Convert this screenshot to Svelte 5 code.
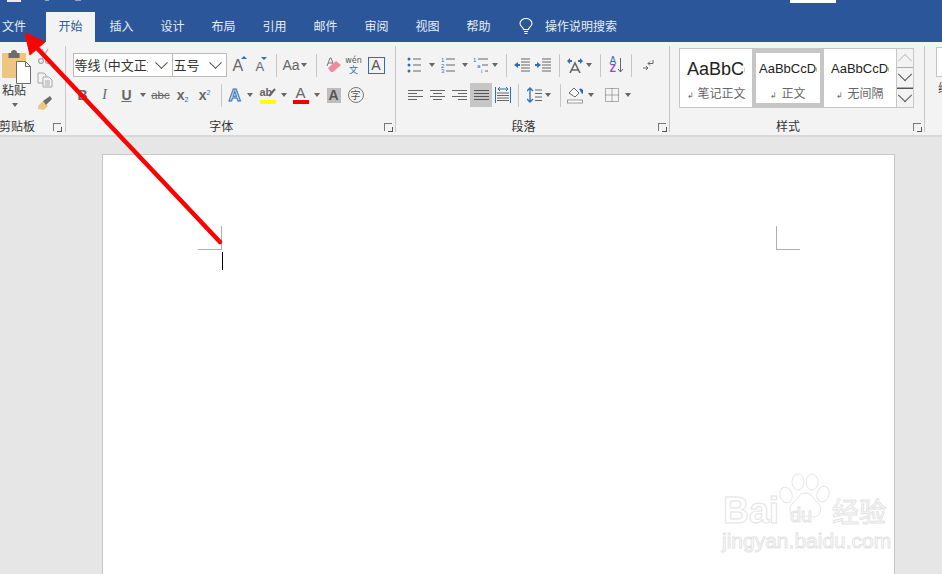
<script lang="ts">
	const tabs = ['开始', '插入', '设计', '布局', '引用', '邮件', '审阅', '视图', '帮助'];
	const styles = [
		{ sample: 'AaBbCc', name: '笔记正文', big: true, selected: false },
		{ sample: 'AaBbCcDd', name: '正文', big: false, selected: true },
		{ sample: 'AaBbCcDd', name: '无间隔', big: false, selected: false }
	];
</script>

<div class="app">
	<div class="titlebar">
		<span class="qat-bit one"></span>
		<span class="qat-bit two"></span>
		<span class="qat-bit three"></span>
		<span class="signin"></span>
	</div>

	<nav class="tabs">
		<span class="tab file">文件</span>
		{#each tabs as tab, i}
			<span class="tab" class:active={i === 0}>{tab}</span>
		{/each}
		<svg class="bulb" viewBox="0 0 14 17" width="14" height="17" fill="none" stroke="#fff" stroke-width="1.1">
			<path d="M4.5 11.500C4.500 9 1 8.500 1 5.500a6 5 0 0 1 12 0C13 8.500 9.500 9 9.500 11.500z" />
			<path d="M5 13.500h4M5.500 15.500h3" />
		</svg>
		<span class="search">操作说明搜索</span>
	</nav>

	<div class="ribbon">
		<section class="group clipboard">
			<div class="group-body clip-body">
				<div class="paste">
					<svg viewBox="0 0 30 34" width="30" height="34">
						<rect x="0" y="3" width="24" height="25" rx="1" fill="#eec682" />
						<path d="M9 3a3 3 0 0 1 6 0h2.500v5h-11V3z" fill="#6d6d6d" />
						<path d="M14.500 11.500h9l5 5v17h-14z" fill="#fff" stroke="#6d6d6d" />
						<path d="M23.500 11.500v5h5" fill="none" stroke="#6d6d6d" />
					</svg>
					<span class="paste-label">粘贴</span>
					<span class="caret"></span>
				</div>
				<div class="clip-tools">
					<svg viewBox="0 0 16 16" width="16" height="16" fill="none" stroke="#a8a8a8" stroke-width="1.3">
						<circle cx="4" cy="13" r="2.400" /><circle cx="11" cy="13" r="2.400" />
						<path d="M5 11l6-10M10 11L5 1" />
					</svg>
					<svg viewBox="0 0 16 16" width="16" height="16" fill="#f3f3f3" stroke="#a8a8a8">
						<path d="M1 1h6l2 2v8H1z" /><path d="M6 5h6l3 3v7H6z" />
						<path d="M8 9h5M8 11h5M8 13h5" />
					</svg>
					<svg viewBox="0 0 16 16" width="16" height="16">
						<path d="M1 11l5-5 5 5-4 4-6-1z" fill="#eec682" />
						<path d="M6 6l3 4 6-6-2-3z" fill="#6d6d6d" />
					</svg>
				</div>
			</div>
			<div class="group-label">剪贴板<span class="launcher"></span></div>
		</section>

		<section class="group font">
			<div class="group-body rows">
				<div class="row">
					<div class="combo family"><span class="combo-text">等线 (中文正文)</span><span class="chev"></span></div>
					<div class="combo size"><span class="combo-text">五号</span><span class="chev"></span></div>
					<span class="ic grow"><b class="big-a">A</b><i class="tri"></i></span>
					<span class="ic shrink"><b class="small-a">A</b><i class="tri down"></i></span>
					<span class="sep s1"></span>
					<span class="ic aa">Aa</span><span class="caret c1"></span>
					<span class="sep s2"></span>
					<svg class="eraser" viewBox="0 0 16 16" width="16" height="16">
						<path d="M1 9L4 1h1l3 8M2 6h5" fill="none" stroke="#777" />
						<path d="M2 11l8-7 5 4-8 7H5z" fill="#ef8a9e" />
					</svg>
					<span class="wen"><em>wén</em><strong>文</strong></span>
					<span class="boxed-a">A</span>
				</div>
				<div class="row second">
					<b class="fmt bold">B</b>
					<i class="fmt italic">I</i>
					<span class="fmt under">U</span><span class="caret c2"></span>
					<span class="fmt strike">abc</span>
					<span class="fmt sub">x<small>2</small></span>
					<span class="fmt sup">x<small>2</small></span>
					<span class="sep s3"></span>
					<span class="effect">A</span><span class="caret c3"></span>
					<span class="marker">
						<em>ab</em>
						<svg class="pen" viewBox="0 0 8 10" width="8" height="10"><path d="M1 9l6-7" stroke="#666" stroke-width="2" /></svg>
						<i class="bar yellow"></i>
					</span><span class="caret c4"></span>
					<span class="marker colour"><b>A</b><i class="bar red"></i></span><span class="caret c5"></span>
					<span class="shaded">A</span>
					<span class="circled">字</span>
				</div>
			</div>
			<div class="group-label">字体<span class="launcher"></span></div>
		</section>

		<section class="group para">
			<div class="group-body rows">
				<div class="row">
					<svg class="pi first" viewBox="0 0 15 16" width="15" height="16">
						<g fill="#2f6eb0"><circle cx="2" cy="2" r="1.500" /><circle cx="2" cy="8" r="1.500" /><circle cx="2" cy="14" r="1.500" /></g>
						<path d="M6 2h8M6 8h8M6 14h8" stroke="#666" />
					</svg>
					<span class="caret k1"></span>
					<svg class="pi p-num" viewBox="0 0 15 16" width="15" height="16">
						<g fill="#2f6eb0" font-size="6" font-family="Liberation Sans"><text x="0" y="5">1</text><text x="0" y="11">2</text><text x="0" y="16">3</text></g>
						<path d="M5 2h9M5 8h9M5 14h9" stroke="#666" />
					</svg>
					<span class="caret k2"></span>
					<svg class="pi p-multi" viewBox="0 0 16 16" width="16" height="16">
						<g fill="#2f6eb0" font-size="6" font-family="Liberation Sans"><text x="0" y="5">1</text><text x="4" y="11">a</text><text x="8" y="16">i</text></g>
						<path d="M5 2h10M9 8h6M12 14h3" stroke="#666" />
					</svg>
					<span class="caret k3"></span>
					<span class="sep p1"></span>
					<svg class="pi indent" viewBox="0 0 16 14" width="16" height="14">
						<path d="M7 1h9M7 4h9M7 7h9M7 10h9M7 13h9" stroke="#666" />
						<path d="M0 7l4-3v2h2v2H4v2z" fill="#2f6eb0" />
					</svg>
					<svg class="pi indent2" viewBox="0 0 16 14" width="16" height="14">
						<path d="M7 1h9M7 4h9M7 7h9M7 10h9M7 13h9" stroke="#666" />
						<path d="M6 7L2 4v2H0v2h2v2z" fill="#2f6eb0" />
					</svg>
					<span class="sep p2"></span>
					<svg class="pi asian" viewBox="0 0 16 15" width="16" height="15">
						<path d="M3 15L8 5l5 10M5 12h6" fill="none" stroke="#666" stroke-width="1.600" />
						<path d="M0 3l3-3v2h2v2H3v2zM16 3l-3-3v2h-2v2h2v2z" fill="#2f6eb0" />
					</svg>
					<span class="caret k4"></span>
					<span class="sep p3"></span>
					<span class="az"><em>A</em><em class="z">Z</em></span>
					<svg class="down" viewBox="0 0 7 16" width="7" height="16"><path d="M3.500 1v14M1 12l2.500 3L6 12" fill="none" stroke="#666" /></svg>
					<span class="sep p4"></span>
					<svg class="pi mark" viewBox="0 0 11 12" width="11" height="12">
						<path d="M10 1v3.500H5M7 2.500l-2 2 2 2" fill="none" stroke="#666" />
						<path d="M0 9h5M3 7l2 2-2 2" fill="none" stroke="#666" />
					</svg>
				</div>
				<div class="row second">
					<span class="al"><svg viewBox="0 0 15 11" width="15" height="11"><path d="M0 .5h15M0 3.500h9M0 6.500h15M0 9.500h9" stroke="#666" /></svg></span>
					<span class="al"><svg viewBox="0 0 15 11" width="15" height="11"><path d="M0 .5h15M3 3.500h9M0 6.500h15M3 9.500h9" stroke="#666" /></svg></span>
					<span class="al"><svg viewBox="0 0 15 11" width="15" height="11"><path d="M0 .5h15M6 3.500h9M0 6.500h15M6 9.500h9" stroke="#666" /></svg></span>
					<span class="al on"><svg viewBox="0 0 15 11" width="15" height="11"><path d="M0 .5h15M0 3.500h15M0 6.500h15M0 9.500h15" stroke="#555" /></svg></span>
					<svg class="dist" viewBox="0 0 16 16" width="16" height="16">
						<path d="M.5 0v16M15.500 0v16" stroke="#2f6eb0" /><path d="M3 2h10M3 2l2-2M3 2l2 2M13 2l-2-2M13 2l-2 2" stroke="#2f6eb0" fill="none" />
						<path d="M2 6h12M2 8.500h12M2 11h12M2 13.500h12" stroke="#666" />
					</svg>
					<span class="sep p5"></span>
					<svg class="spacing" viewBox="0 0 16 16" width="16" height="16">
						<path d="M3 1v14M0 4l3-3 3 3M0 12l3 3 3-3" fill="none" stroke="#2f6eb0" stroke-width="1.300" />
						<path d="M8 3h7M8 6.500h7M8 10h7M8 13.500h7" stroke="#666" />
					</svg>
					<span class="caret k5"></span>
					<span class="sep p6"></span>
					<svg class="fill" viewBox="0 0 16 18" width="16" height="18">
						<path d="M2 7l5-5 5 5-4 4z" fill="#fff" stroke="#666" />
						<path d="M12 3a2.500 2.500 0 0 1 3 5z" fill="#2f6eb0" />
						<rect x=".5" y="14" width="15" height="3" fill="#fff" stroke="#999" />
					</svg>
					<span class="caret k6"></span>
					<svg class="borders" viewBox="0 0 14 14" width="14" height="14">
						<path d="M.5.5h13v13H.5zM.5 7h13M7 .5v13" fill="none" stroke="#666" stroke-dasharray="1 1" />
					</svg>
					<span class="caret k7"></span>
				</div>
			</div>
			<div class="group-label">段落<span class="launcher"></span></div>
		</section>

		<section class="group styles">
			<div class="group-body gallery-wrap">
				<div class="gallery">
					{#each styles as s}
						<div class="style" class:selected={s.selected}>
							<span class="sample" class:big={s.big}>{s.sample}</span>
							<span class="style-name"><i>↲</i>{s.name}</span>
						</div>
					{/each}
					<div class="scroll">
						<span class="sb up"><i class="chev upchev"></i></span>
						<span class="sb"><i class="chev"></i></span>
						<span class="sb more"><i class="chev"></i></span>
					</div>
				</div>
			</div>
			<div class="group-label">样式<span class="launcher"></span></div>
		</section>

		<section class="group editing">
			<div class="edit-box"></div>
			<span class="edit-label">编辑</span>
		</section>
	</div>

	<main class="doc">
		<div class="page">
			<span class="crop left"></span>
			<span class="crop right"></span>
			<span class="cursor"></span>
			<div class="watermark">
				<svg viewBox="0 0 56 50" width="56" height="50" fill="#fff" stroke="#e6e6e6" stroke-width="1">
					<ellipse cx="9" cy="22" rx="6" ry="8" transform="rotate(-20 9 22)" />
					<ellipse cx="21" cy="9" rx="6" ry="8" />
					<ellipse cx="35" cy="9" rx="6" ry="8" />
					<ellipse cx="46" cy="21" rx="6" ry="8" transform="rotate(20 46 21)" />
					<path d="M28 20c-6 0-7 6-12 10-6 5-3 14 5 14 3 0 5-1 7-1s5 1 8 1c8 0 10-9 5-14-5-4-6-10-13-10z" />
				</svg>
				<span class="wm-bai">Bai</span>
				<span class="wm-du">du</span>
				<span class="wm-cn">经验</span>
				<span class="wm-url">jingyan.baidu.com</span>
			</div>
		</div>
	</main>

	<svg class="arrow" viewBox="0 0 942 574" width="942" height="574">
		<path d="M220 242L37 48" stroke="#f00" stroke-width="4.500" stroke-linecap="round" />
		<path d="M25 33L45 42 30 55z" fill="#f00" stroke="#f00" stroke-linejoin="round" />
	</svg>
</div>

<style>
	:global(body) {
		margin: 0;
		overflow: hidden;
	}

	.app {
		position: relative;
		width: 942px;
		height: 574px;
		overflow: hidden;
		display: flex;
		flex-direction: column;
		font-family: 'Noto Sans CJK SC', 'Liberation Sans', sans-serif;
		font-size: 12px;
		color: #444;
		background: #e6e6e6;
	}

	.titlebar {
		height: 12px;
		background: #2b579a;
		flex-shrink: 0;
		display: flex;
		align-items: flex-start;
	}

	.qat-bit {
		height: 1px;
		background: #8ea6c9;
	}

	.qat-bit.one { width: 14px; height: 2px; margin-left: 7px; background: #e8edf5; }
	.qat-bit.two { width: 4px; margin-left: 24px; }
	.qat-bit.three { width: 6px; margin-left: 26px; }

	.signin {
		width: 46px;
		height: 3px;
		margin-left: 709px;
		background: #fff;
	}

	.tabs {
		height: 30px;
		background: #2b579a;
		flex-shrink: 0;
		display: flex;
		align-items: stretch;
		color: #fff;
	}

	.tab {
		width: 51px;
		display: flex;
		align-items: center;
		justify-content: center;
		line-height: 1;
		padding-bottom: 3px;
		box-sizing: border-box;
		color: #e8edf5;
	}

	.tab.file {
		width: 46px;
		justify-content: flex-start;
		padding-left: 2px;
	}

	.tab.active {
		width: 49px;
		background: #f3f3f3;
		color: #2b579a;
	}

	.tab.active + .tab {
		margin-left: 1px;
	}

	.bulb {
		margin: 6px 0 0 15px;
	}

	.search {
		margin-left: 12px;
		line-height: 1;
		align-self: center;
		padding-bottom: 3px;
		color: #e8edf5;
	}

	.ribbon {
		height: 91px;
		padding-top: 2px;
		background: #f3f3f3;
		border-bottom: 2px solid #d8d8d8;
		flex-shrink: 0;
		display: flex;
	}

	.group {
		position: relative;
		display: flex;
		flex-direction: column;
		flex-shrink: 0;
		box-sizing: border-box;
		border-right: 1px solid #c6c6c6;
		margin-top: 2px;
		margin-bottom: 3px;
	}

	.group-body {
		height: 72px;
		flex-shrink: 0;
	}

	.group-label {
		position: relative;
		height: 16px;
		flex-shrink: 0;
		padding-right: 18px;
		line-height: 16px;
		text-align: center;
		color: #333;
		white-space: nowrap;
	}

	.launcher {
		position: absolute;
		right: 3px;
		bottom: 3px;
		width: 7px;
		height: 7px;
		border-left: 1px solid #777;
		border-top: 1px solid #777;
	}

	.launcher::after {
		content: '';
		position: absolute;
		right: -1px;
		bottom: -1px;
		width: 4px;
		height: 4px;
		border-right: 1px solid #555;
		border-bottom: 1px solid #555;
	}

	.clipboard { width: 65.500px; }
	.font { width: 330.500px; }
	.para { width: 274px; }
	.styles { width: 255px; }

	.clipboard .group-label {
		padding-right: 0;
		margin-left: -1px;
		text-align: left;
	}

	.clipboard .launcher { right: 4px; }

	.editing {
		flex: 1;
		min-width: 0;
		overflow: hidden;
		border-right: 0;
		padding: 1px 0 0 11px;
	}

	.edit-box {
		height: 30px;
		box-sizing: border-box;
		background: #fff;
		border: 1px solid #c6c6c6;
		border-right: 0;
		flex-shrink: 0;
	}

	.edit-label {
		margin: 5px 0 0 2px;
		line-height: 12px;
		white-space: nowrap;
	}

	.clip-body {
		display: flex;
		padding-top: 4px;
		box-sizing: border-box;
	}

	.paste {
		width: 37px;
		display: flex;
		flex-direction: column;
		align-items: flex-start;
		padding-left: 2px;
		box-sizing: border-box;
		flex-shrink: 0;
	}

	.paste-label {
		line-height: 16px;
		margin-top: -2px;
		color: #333;
	}

	.paste .caret {
		margin: 5px 0 0 9.500px;
	}

	.clip-tools {
		display: flex;
		flex-direction: column;
		gap: 7.500px;
		margin-top: -2px;
	}

	.caret {
		display: inline-block;
		width: 0;
		height: 0;
		border-left: 3.500px solid transparent;
		border-right: 3.500px solid transparent;
		border-top: 4px solid #666;
		flex-shrink: 0;
	}

	.rows {
		display: flex;
		flex-direction: column;
		padding-top: 7px;
		box-sizing: border-box;
	}

	.row {
		height: 24px;
		display: flex;
		align-items: center;
		flex-shrink: 0;
	}

	.row.second {
		margin-top: 6px;
	}

	.sep {
		width: 1px;
		height: 23px;
		background: #c6c6c6;
		flex-shrink: 0;
	}

	.combo {
		height: 24px;
		box-sizing: border-box;
		background: #fff;
		border: 1px solid #bbb;
		display: flex;
		align-items: center;
		flex-shrink: 0;
		color: #333;
		overflow: hidden;
	}

	.combo.family {
		width: 100px;
		margin-left: 7px;
	}

	.combo.size {
		width: 55px;
		margin-left: -1px;
	}

	.combo-text {
		flex: 1;
		min-width: 0;
		padding-left: 1px;
		white-space: nowrap;
		overflow: hidden;
		font-size: 13px;
		line-height: 1.300;
	}

	.chev {
		display: inline-block;
		width: 8px;
		height: 8px;
		border-right: 1px solid #555;
		border-bottom: 1px solid #555;
		transform: rotate(45deg) translate(-2px, -2px);
		margin-right: 6px;
		flex-shrink: 0;
	}

	.combo.family .chev { margin-left: 9px; }

	.ic {
		position: relative;
		display: inline-flex;
		align-items: flex-end;
		flex-shrink: 0;
		font-family: 'Liberation Sans', sans-serif;
		color: #666;
	}

	.grow { margin-left: 6px; width: 14px; height: 18px; }
	.shrink { margin-left: 9px; width: 11px; height: 17px; }
	.big-a { font-size: 16px; font-weight: 400; line-height: 16px; }
	.small-a { font-size: 13px; font-weight: 400; line-height: 14px; }

	.tri {
		position: absolute;
		right: 0;
		top: 0;
		width: 0;
		height: 0;
		border-left: 3px solid transparent;
		border-right: 3px solid transparent;
		border-bottom: 3px solid #2f6eb0;
	}

	.tri.down {
		border-bottom: 0;
		border-top: 3px solid #2f6eb0;
	}

	.sep.s1 { margin-left: 9px; }
	.aa { margin-left: 6px; font-size: 14px; width: 16px; }
	.caret.c1 { margin-left: 2.500px; }
	.sep.s2 { margin-left: 8.500px; }
	.eraser { margin-left: 9px; flex-shrink: 0; }

	.wen {
		margin-left: 4px;
		width: 16px;
		display: flex;
		flex-direction: column;
		align-items: center;
		line-height: 9px;
		flex-shrink: 0;
	}

	.wen em {
		font-style: normal;
		font-family: 'DejaVu Sans', sans-serif;
		font-size: 8px;
		color: #555;
	}

	.wen strong {
		font-weight: 400;
		font-size: 9px;
		color: #2f6eb0;
	}

	.boxed-a {
		margin-left: 6px;
		width: 17px;
		height: 17px;
		box-sizing: border-box;
		border: 1px solid #2f6eb0;
		text-align: center;
		line-height: 15px;
		font-family: 'Liberation Sans', sans-serif;
		font-size: 14px;
		color: #555;
		flex-shrink: 0;
	}

	.fmt {
		flex-shrink: 0;
		width: 22px;
		text-align: center;
		font-family: 'Liberation Sans', sans-serif;
		font-size: 14px;
		color: #666;
	}

	.bold { margin-left: 6px; font-weight: 700; }
	.italic { font-family: 'Liberation Serif', serif; }
	.under { text-decoration: underline; font-weight: 700; }
	.caret.c2 { margin-left: 2.500px; }
	.strike { text-decoration: line-through; font-size: 11.500px; margin-left: 3.500px; }
	.sub, .sup { font-weight: 700; }
	.sub small, .sup small { font-size: 7px; font-weight: 400; color: #2f6eb0; }
	.sub small { vertical-align: -2px; }
	.sup small { vertical-align: 5px; }
	.sep.s3 { margin-left: 5px; }

	.effect {
		margin-left: 7px;
		width: 13px;
		font-family: 'Liberation Sans', sans-serif;
		font-size: 17px;
		font-weight: 700;
		line-height: 1;
		color: #dfeaf6;
		-webkit-text-stroke: 1px #2f6eb0;
		flex-shrink: 0;
	}

	.caret.c3 { margin-left: 5.500px; }

	.marker {
		position: relative;
		width: 16px;
		height: 18px;
		margin-left: 6.500px;
		display: flex;
		justify-content: flex-start;
		flex-shrink: 0;
		font-family: 'Liberation Sans', sans-serif;
		font-size: 11px;
		line-height: 13px;
		color: #666;
	}

	.marker em { font-style: normal; font-weight: 700; }

	.pen {
		position: absolute;
		right: 0;
		top: 1px;
	}

	.marker.colour {
		margin-left: 5.500px;
		justify-content: center;
		font-size: 15px;
	}

	.marker.colour b { font-weight: 400; }

	.bar {
		position: absolute;
		left: 0;
		right: 0;
		bottom: 0;
		height: 4px;
	}

	.bar.yellow { background: #ffff00; }
	.bar.red { background: #f00000; }
	.caret.c4, .caret.c5 { margin-left: 5.500px; }

	.shaded {
		margin-left: 6.500px;
		width: 14px;
		height: 15px;
		background: #bdbdbd;
		text-align: center;
		font-family: 'Liberation Sans', sans-serif;
		font-size: 14px;
		font-weight: 700;
		line-height: 15px;
		color: #555;
		flex-shrink: 0;
	}

	.circled {
		margin-left: 7px;
		width: 16px;
		height: 16px;
		box-sizing: border-box;
		border: 1px solid #777;
		border-radius: 50%;
		text-align: center;
		font-size: 10px;
		line-height: 13px;
		color: #555;
		flex-shrink: 0;
	}

	.pi { flex-shrink: 0; }
	.pi.first { margin-left: 11px; }
	.caret.k1 { margin-left: 6.500px; }
	.pi.p-num { margin-left: 6.500px; }
	.caret.k2 { margin-left: 5.500px; }
	.pi.p-multi { margin-left: 5.500px; }
	.caret.k3 { margin-left: 2.500px; }
	.sep.p1 { margin-left: 8.500px; }
	.pi.indent { margin-left: 7px; }
	.pi.indent2 { margin-left: 5px; }
	.sep.p2 { margin-left: 8px; }
	.pi.asian { margin-left: 7px; }
	.caret.k4 { margin-left: 2.500px; }
	.sep.p3 { margin-left: 8.500px; }

	.az {
		margin-left: 8px;
		width: 7.500px;
		display: flex;
		flex-direction: column;
		align-items: center;
		font-family: 'Liberation Sans', sans-serif;
		font-size: 10px;
		line-height: 8px;
		flex-shrink: 0;
	}

	.az em { font-style: normal; color: #2f6eb0; }
	.az em.z { color: #8e4fae; font-weight: 700; }
	.down { flex-shrink: 0; }
	.sep.p4 { margin-left: 7.500px; }
	.pi.mark { margin-left: 11px; }

	.al {
		width: 22px;
		height: 24px;
		display: flex;
		align-items: center;
		justify-content: center;
		flex-shrink: 0;
	}

	.al:first-child { margin-left: 8px; }
	.al.on { background: #c6c6c6; }
	.dist { margin-left: 3px; flex-shrink: 0; }
	.sep.p5 { margin-left: 7px; }
	.spacing { margin-left: 8px; flex-shrink: 0; }
	.caret.k5 { margin-left: 1.500px; }
	.sep.p6 { margin-left: 9.500px; }
	.fill { margin-left: 6px; flex-shrink: 0; }
	.caret.k6 { margin-left: 4.500px; }
	.borders { margin-left: 11px; flex-shrink: 0; }
	.caret.k7 { margin-left: 6.500px; }

	.gallery-wrap {
		padding: 2px 0 0 9px;
		box-sizing: border-box;
	}

	.gallery {
		width: 235px;
		height: 60px;
		box-sizing: border-box;
		background: #fff;
		border: 1px solid #c6c6c6;
		display: flex;
	}

	.style {
		width: 72px;
		height: 58px;
		box-sizing: border-box;
		display: flex;
		flex-direction: column;
		align-items: flex-start;
		overflow: hidden;
		padding: 9px 0 0 7px;
		flex-shrink: 0;
	}

	.style.selected {
		border: 4px solid #c6c6c6;
		padding: 5px 0 0 3px;
	}

	.sample {
		width: 58px;
		height: 22px;
		overflow: hidden;
		font-family: 'Liberation Sans', sans-serif;
		font-size: 13px;
		line-height: 22px;
		color: #222;
		white-space: nowrap;
	}

	.sample.big {
		font-size: 18px;
	}

	.style-name {
		align-self: center;
		margin: 6px 7px 0 0;
		line-height: 14px;
		color: #666;
		white-space: nowrap;
	}

	.selected .style-name {
		margin-right: 3px;
	}

	.style-name i {
		font-style: normal;
		font-size: 8px;
		margin-right: 4px;
	}

	.scroll {
		flex: 1;
		display: flex;
		flex-direction: column;
		border-left: 1px solid #c6c6c6;
		background: #f3f3f3;
	}

	.sb {
		flex: 1;
		display: flex;
		align-items: center;
		justify-content: center;
		border-bottom: 1px solid #aaa;
	}

	.sb:last-child { border-bottom: 0; }
	.sb .chev { margin: 0; width: 9px; height: 9px; transform: rotate(45deg) translate(-2px, -2px); }
	.sb .upchev { border-color: #c6c6c6; transform: rotate(-135deg) translate(-2px, -2px); }
	.sb.more { border-top: 1px solid #555; }

	.doc {
		flex: 1;
		min-height: 0;
		background: #e6e6e6;
		padding: 17px 0 0 102px;
	}

	.page {
		position: relative;
		width: 793px;
		height: 500px;
		box-sizing: border-box;
		background: #fff;
		border: 1px solid #c6c6c6;
	}

	.crop {
		position: absolute;
		top: 71px;
		width: 24px;
		height: 24px;
		box-sizing: border-box;
		border-bottom: 1px solid #b0b0b0;
	}

	.crop.left { left: 95px; border-right: 1px solid #b0b0b0; }
	.crop.right { left: 673px; border-left: 1px solid #b0b0b0; }

	.cursor {
		position: absolute;
		left: 119px;
		top: 97px;
		width: 1px;
		height: 18px;
		background: #000;
	}

	.watermark {
		position: absolute;
		left: 617px;
		top: 318px;
		width: 172px;
		height: 84px;
		font-family: 'Liberation Sans', sans-serif;
		color: #fff;
		-webkit-text-stroke: 1px #e4e4e4;
	}

	.watermark svg { position: absolute; left: 57px; top: 0; }
	.wm-bai { position: absolute; left: 3px; top: 20px; font-size: 36px; line-height: 36px; font-weight: 700; }
	.wm-du { position: absolute; left: 70px; top: 33px; font-size: 20px; line-height: 18px; }
	.wm-cn { position: absolute; left: 112px; top: 23px; font-size: 27px; line-height: 30px; font-family: 'Noto Sans CJK SC', sans-serif; }
	.wm-url { position: absolute; left: 2px; top: 56px; font-size: 21px; line-height: 24px; white-space: nowrap; }

	.arrow {
		position: absolute;
		left: 0;
		top: 0;
		pointer-events: none;
	}
</style>
